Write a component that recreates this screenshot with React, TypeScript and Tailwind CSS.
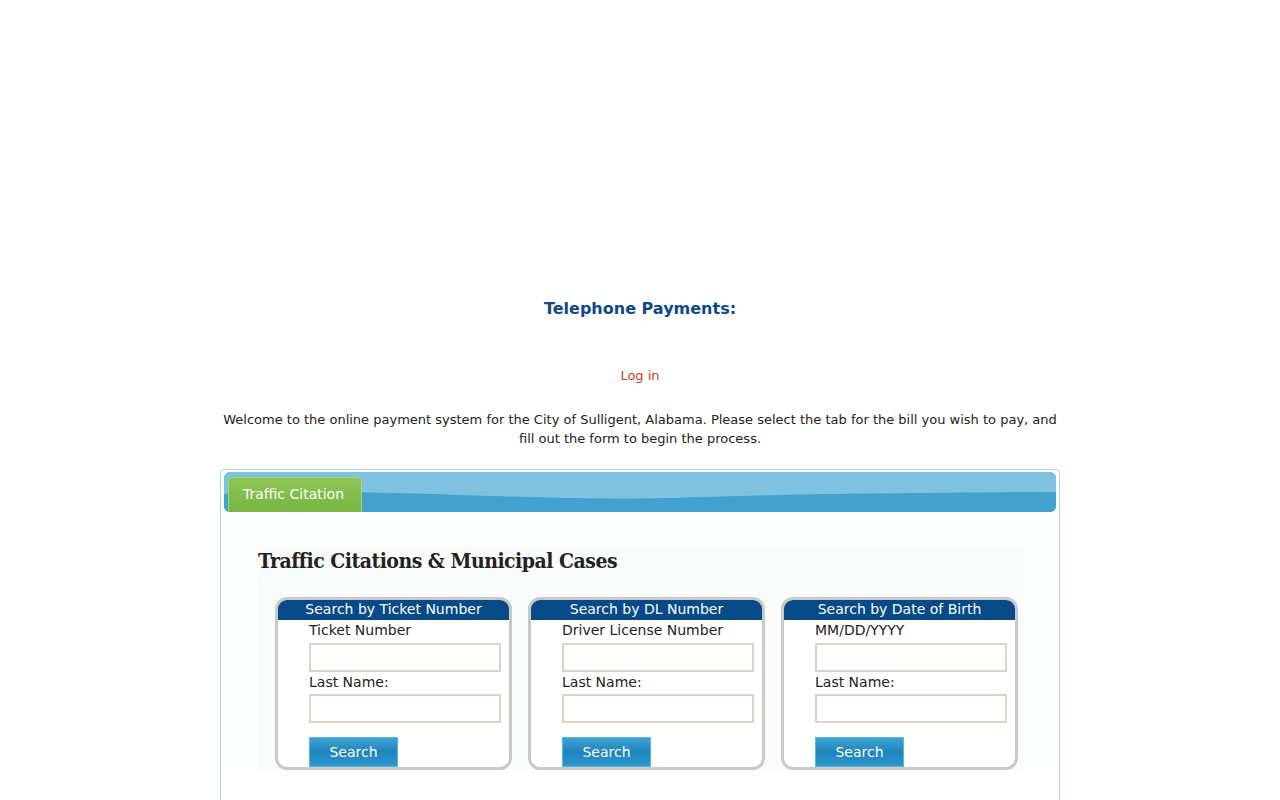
import React from 'react';

const sans = { fontFamily: '"DejaVu Sans", Verdana, sans-serif' };

interface SearchCardProps {
  title: string;
  label: string;
}

function SearchCard({ title, label }: SearchCardProps) {
  return (
    <div className="flex h-[173px] w-[237px] flex-col rounded-[12px] border-[3px] border-[#c9c9c9] bg-white">
      <div className="h-[20px] rounded-t-[9px] bg-[#064a88] text-center text-[14px] leading-[19px] text-white">
        {title}
      </div>
      <div className="flex flex-col pl-[31px]">
        <label className="text-[14px] leading-[20px] text-[#222]">{label}</label>
        <input
          type="text"
          className="mt-[3px] h-[29px] w-[192px] border-2 border-[#dbd4c6] bg-white outline-none"
        />
        <label className="text-[14px] leading-[20px] text-[#222]">Last Name:</label>
        <input
          type="text"
          className="mt-[2px] h-[29px] w-[192px] border-2 border-[#dbd4c6] bg-white outline-none"
        />
        <button className="mt-[14px] h-[30px] w-[89px] border border-[#5fb4de] bg-gradient-to-b from-[#3ea3d4] via-[#1f84bc] to-[#2d97ce] text-[14px] leading-[28px] text-white">
          Search
        </button>
      </div>
    </div>
  );
}

export default function App() {
  return (
    <div className="min-h-[800px] bg-white" style={sans}>
      <div className="mx-auto w-[840px] pt-[299px]">
        <p className="text-center text-[16px] font-bold leading-[20px] text-[#0b4a86]">
          Telephone Payments:
        </p>
        <p className="mt-[47px] text-center text-[13px] leading-[20px] text-[#c2451b]">
          Log in
        </p>
        <p className="mt-[24px] text-center text-[13px] leading-[19px] text-[#222]">
          Welcome to the online payment system for the City of Sulligent, Alabama. Please
          select the tab for the bill you wish to pay, and fill out the form to begin the
          process.
        </p>

        <div className="mt-[21px] h-[340px] rounded-[4px] border border-[#b3cfe0] bg-white px-[3px] pt-[2px]">
          {/* tab bar */}
          <div className="relative h-[40px] overflow-hidden rounded-[6px] bg-gradient-to-b from-[#7cc1e0] to-[#3c9dcb]">
            <svg
              className="absolute inset-0 h-full w-full"
              viewBox="0 0 831 40"
              preserveAspectRatio="none"
            >
              <path
                d="M0 0 H831 V20 C700 21 560 22 450 26 C340 29 250 22 120 20 C70 19 30 20 0 22 Z"
                fill="#7ec2e0"
              />
              <path
                d="M0 22 C30 20 70 19 120 20 C250 22 340 29 450 26 C560 22 700 21 831 20 V40 H0 Z"
                fill="#43a1cd"
              />
            </svg>
            <div className="relative flex h-full items-end pl-[4px]">
              <div className="h-[35px] w-[134px] rounded-t-[5px] border border-b-0 border-[#a8d874] bg-gradient-to-b from-[#8cc556] to-[#78b542] pl-[14px] text-[14px] leading-[32px] text-white">
                Traffic Citation
              </div>
            </div>
          </div>

          {/* panel */}
          <div className="bg-[#fdfefe] pl-[34px] pr-[33px] pt-[34px]">
            <div className="bg-[#fafbfb]">
              <h2
                className="h-[30px] text-[21px] font-bold leading-[30px] tracking-[-0.5px] text-[#222]"
                style={{ fontFamily: '"DejaVu Serif Condensed", "DejaVu Serif", serif' }}
              >
                Traffic Citations &amp; Municipal Cases
              </h2>
              <div className="flex gap-[16px] pl-[17px] pt-[21px]">
                <SearchCard title="Search by Ticket Number" label="Ticket Number" />
                <SearchCard title="Search by DL Number" label="Driver License Number" />
                <SearchCard title="Search by Date of Birth" label="MM/DD/YYYY" />
              </div>
            </div>
          </div>
        </div>
      </div>
    </div>
  );
}
